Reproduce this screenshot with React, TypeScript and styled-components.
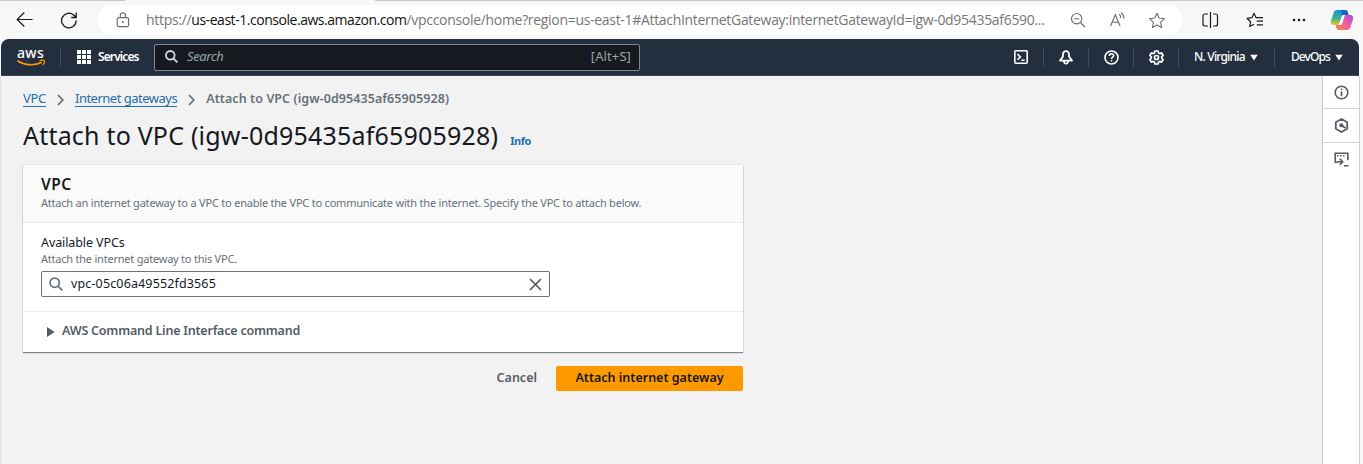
import React from "react";
import styled, { createGlobalStyle } from "styled-components";

const Global = createGlobalStyle`
  * { box-sizing: border-box; }
  body { margin: 0; background: #f7f7f7; font-family: "Noto Sans", "Open Sans", sans-serif; overflow: hidden; }
  svg { display: block; flex: none; }
`;

const Page = styled.div`
  width: 1363px;
  height: 464px;
  display: flex;
  flex-direction: column;
  overflow: hidden;
`;

const T = styled.span<{ $size: number; $ls?: number; $w?: number; $c?: string; $lh?: number; $up?: number; $ml?: number }>`
  font-size: ${(p) => p.$size}px;
  letter-spacing: ${(p) => p.$ls ?? 0}px;
  font-weight: ${(p) => p.$w ?? 400};
  color: ${(p) => p.$c ?? "#16191f"};
  line-height: ${(p) => p.$lh ?? 18}px;
  padding-bottom: ${(p) => p.$up ?? 0}px;
  margin-left: ${(p) => p.$ml ?? 0}px;
  white-space: nowrap;
`;

/* Browser chrome */
const TabEdge = styled.div`
  display: flex;
  justify-content: space-between;
  height: 1px;
  flex: none;
`;
const Edge = styled.div<{ $width: number }>`
  width: ${(p) => p.$width}px;
  background: #c9c9cb;
`;
const BrowserBar = styled.div`
  height: 38px;
  flex: none;
  display: flex;
  align-items: center;
  background: #f7f7f7;
  padding-left: 16px;
`;
const Reload = styled.div`
  margin: 0 19px 0 27px;
`;
const UrlPill = styled.div`
  width: 1086px;
  height: 30px;
  border-radius: 15px;
  background: #fff;
  display: flex;
  align-items: center;
  padding: 0 16px 0 19px;
`;
const Url = styled.div`
  width: 902px;
  margin-left: 16px;
  font-family: "Open Sans", "Noto Sans", sans-serif;
  font-size: 14px;
  line-height: 20px;
  letter-spacing: -0.31px;
  color: #767676;
  white-space: nowrap;
  b { font-weight: 400; color: #111; letter-spacing: -0.46px; }
`;
const PillTools = styled.div`
  display: flex;
  align-items: center;
  gap: 22px;
  margin-left: auto;
  padding-right: 1px;
`;
const BarTools = styled.div`
  display: flex;
  align-items: center;
  margin-left: 18px;
`;
const Gap = styled.span<{ $width: number }>`
  width: ${(p) => p.$width}px;
`;

/* Console navigation */
const Nav = styled.header`
  height: 37px;
  width: 1358px;
  margin-left: 1px;
  flex: none;
  display: flex;
  align-items: center;
  background: #232f3e;
  border-bottom: 1px solid #3b4450;
  border-radius: 8px 8px 0 0;
`;
const Logo = styled.div`
  width: 60px;
  height: 20px;
  display: flex;
  flex-direction: column;
  border-right: 1px solid #414d5c;
  padding-left: 16px;
`;
const LogoWord = styled.span`
  font-size: 14px;
  font-weight: 500;
  line-height: 18px;
  height: 15px;
  margin-top: -3px;
  letter-spacing: 0.3px;
  color: #fff;
`;
const Services = styled.div`
  display: flex;
  align-items: center;
  gap: 7px;
  width: 93px;
  padding-left: 16px;
`;
const NavSearch = styled.div`
  width: 486px;
  height: 27px;
  display: flex;
  align-items: center;
  justify-content: space-between;
  padding: 0 8px 1px 10px;
  border: 1px solid #7d8998;
  border-radius: 2px;
  background: #161a20;
`;
const SearchLeft = styled.div`
  display: flex;
  align-items: center;
  gap: 9px;
  em { font-size: 13px; color: #95a5a6; line-height: 18px; letter-spacing: -0.4px; padding-bottom: 1px; }
`;
const NavRight = styled.div`
  display: flex;
  margin-left: auto;
`;
const NavCell = styled.div<{ $width: number; $last?: boolean; $pad?: number }>`
  width: ${(p) => p.$width}px;
  height: 20px;
  display: flex;
  align-items: center;
  justify-content: ${(p) => (p.$pad ? "flex-start" : "center")};
  padding-left: ${(p) => p.$pad ?? 0}px;
  gap: 5px;
  border-right: ${(p) => (p.$last ? "none" : "1px solid #414d5c")};
`;

/* Console body */
const Body = styled.div`
  flex: 1;
  display: flex;
  width: 1360px;
  background: #f2f2f2;
  border-left: 1px solid #e4e4e6;
`;
const Main = styled.main`
  flex: 1;
  padding: 12px 0 0 22px;
`;
const Rail = styled.aside`
  width: 38px;
  background: #fff;
  border-left: 1px solid #c9cbcd;
  border-right: 1px solid #cfd1d3;
`;
const RailItem = styled.div<{ $h: number; $open?: boolean }>`
  height: ${(p) => p.$h}px;
  display: flex;
  align-items: center;
  justify-content: center;
  border-bottom: ${(p) => (p.$open ? "none" : "1px solid #d0d5d9")};
`;
const Crumbs = styled.nav`
  display: flex;
  align-items: center;
  height: 21px;
`;
const CrumbLink = styled.a<{ $ls: number }>`
  font-size: 13px;
  line-height: 16px;
  height: 17px;
  letter-spacing: ${(p) => p.$ls}px;
  color: #2470ad;
  border-bottom: 1px solid #2470ad;
  white-space: nowrap;
`;
const CrumbSep = styled.span<{ $wide?: boolean }>`
  padding: 2px 11px 0 ${(p) => (p.$wide ? 12 : 11)}px;
`;
const Heading = styled.div`
  display: flex;
  align-items: baseline;
  gap: 12px;
  height: 56px;
  padding-top: 8px;
`;
const Title = styled.h1`
  margin: 0;
  font-size: 25px;
  font-weight: 400;
  line-height: 36px;
  color: #16191f;
  letter-spacing: 0.2px;
  white-space: nowrap;
`;
const Card = styled.section`
  width: 720px;
  height: 187px;
  background: #fff;
  box-shadow: 0 0 1px 0 #aab0b6, 0 1px 1px 0 #777d86;
`;
const CardHead = styled.div`
  height: 58px;
  display: flex;
  flex-direction: column;
  padding: 9px 18px 0;
  background: #fafafa;
  border-bottom: 1px solid #eaeded;
`;
const CardBody = styled.div`
  height: 89px;
  display: flex;
  flex-direction: column;
  padding: 11px 18px 0;
  border-bottom: 1px solid #eaeded;
`;
const Input = styled.div`
  width: 509px;
  height: 26px;
  margin-top: 4px;
  display: flex;
  align-items: center;
  border: 1px solid #687078;
  border-radius: 2px;
  padding: 0 7px;
  svg:last-child { margin-left: auto; }
`;
const Expander = styled.div`
  height: 39px;
  display: flex;
  align-items: center;
  gap: 7px;
  padding-left: 24px;
`;
const Actions = styled.div`
  width: 720px;
  margin-top: 14px;
  display: flex;
  align-items: center;
  justify-content: flex-end;
  gap: 19px;
`;
const Primary = styled.button`
  width: 187px;
  height: 25px;
  padding: 0 0 1px;
  border: 0;
  border-radius: 2px;
  background: #ff9900;
  font-family: inherit;
  display: flex;
  align-items: center;
  justify-content: center;
`;

const Magnifier = ({ size, color, w }: { size: number; color: string; w: number }) => (
  <svg width={size} height={size} viewBox="0 0 13 13" fill="none" stroke={color} strokeWidth={w}>
    <circle cx="5.3" cy="5.3" r="4.3" />
    <path d="M8.4 8.4 12.4 12.4" />
  </svg>
);
const Chevron = () => (
  <svg width="7" height="12" viewBox="0 0 7 12" fill="none" stroke="#687078" strokeWidth="1.8">
    <path d="M1 1 5.8 6 1 11" />
  </svg>
);
const Caret = () => (
  <svg width="8" height="7" viewBox="0 0 8 7" fill="#fff"><path d="M.3.8h7.4L4 6.6z" /></svg>
);
const star = "M8 1.2 10.1 5.7 15 6.3 11.4 9.7 12.3 14.6 8 12.2 3.7 14.6 4.6 9.7 1 6.3 5.9 5.7z";

export default function App() {
  return (
    <Page>
      <Global />
      <TabEdge><Edge $width={125} /><Edge $width={988} /></TabEdge>
      <BrowserBar>
        <svg width="17" height="16" viewBox="0 0 17 16" fill="none" stroke="#1b1b1b" strokeWidth="1.2">
          <path d="M16.5 7.500H1.5M8.3.5 1.200 7.500l7.1 7" />
        </svg>
        <Reload>
          <svg width="18" height="17" viewBox="0 0 18 17" fill="none" stroke="#1b1b1b" strokeWidth="1.3">
            <path d="M16.200 8.500a7.300 7.300 0 1 1-2.500-5.500L15.900 5M16.200.5v5h-5" />
          </svg>
        </Reload>
        <UrlPill>
          <svg width="14" height="16" viewBox="0 0 14 16" fill="none" stroke="#666" strokeWidth="1.1">
            <rect x="1.2" y="5.6" width="11.4" height="9" rx="1.6" />
            <path d="M4.3 5.5V3.4a2.6 2.6 0 0 1 5.2 0v2.1" />
            <circle cx="6.9" cy="10" r=".9" fill="#555" stroke="none" />
          </svg>
          <Url>https://<b>us-east-1.console.aws.amazon.com</b>/vpcconsole/home?region=us-east-1#AttachInternetGateway:internetGatewayId=igw-0d95435af6590...</Url>
          <PillTools>
            <svg width="16" height="16" viewBox="0 0 16 16" fill="none" stroke="#6a6a6a" strokeWidth="1.1">
              <circle cx="6.7" cy="6.7" r="5.2" /><path d="M10.5 10.5 15 15M4.2 6.7h5" />
            </svg>
            <svg width="18" height="16" viewBox="0 0 18 16" fill="none" stroke="#6a6a6a" strokeWidth="1.1">
              <path d="M2.500 14 7.300 2.700 12.100 14M4.200 10.200h6.200M11 2.300a4 4 0 0 1 1.800 3.700M13 .7a7 7 0 0 1 3 6" />
            </svg>
            <svg width="18" height="17" viewBox="0 0 16 16" fill="none" stroke="#6a6a6a" strokeWidth="1" strokeLinejoin="round"><path d={star} /></svg>
          </PillTools>
        </UrlPill>
        <BarTools>
          <svg width="18" height="16" viewBox="0 0 18 16" fill="none" stroke="#1b1b1b" strokeWidth="1.2">
            <path d="M7 2H4a2 2 0 0 0-2 2v8a2 2 0 0 0 2 2h3M12 2h2.500a2 2 0 0 1 2 2v8a2 2 0 0 1-2 2H12M9.500 0v16" />
          </svg>
          <Gap $width={27} />
          <svg width="18" height="16" viewBox="0 0 18 16" fill="none" stroke="#1b1b1b" strokeWidth="1.2" strokeLinejoin="round">
            <path d="M11 5.7H10.1L8 1.2 5.9 5.7 1 6.3 4.6 9.7 3.7 14.6 8 12.2M10.8 5.6H17M10.8 9.2H17M10.8 12.8H17" />
          </svg>
          <Gap $width={28} />
          <svg width="14" height="4" viewBox="0 0 14 4" fill="#1b1b1b">
            <circle cx="2" cy="2" r="1.3" /><circle cx="7" cy="2" r="1.3" /><circle cx="12" cy="2" r="1.3" />
          </svg>
          <Gap $width={24} />
          <svg width="24" height="22" viewBox="0 0 24 22">
            <defs>
              <linearGradient id="cl" x1="0" y1="0" x2="0" y2="1"><stop offset="0" stopColor="#1b8fe0" /><stop offset=".55" stopColor="#35b48c" /><stop offset="1" stopColor="#f4c52c" /></linearGradient>
              <linearGradient id="cr" x1="1" y1="0" x2="0" y2="1"><stop offset="0" stopColor="#a14ee0" /><stop offset=".5" stopColor="#ee5d9b" /><stop offset="1" stopColor="#fb8a3c" /></linearGradient>
            </defs>
            <path d="M7.2 1h8c1.5 0 2.2.9 2.6 2.4L18.500 6h-3c-2 0-2.800 1-3.400 3l-1.600 5c-.5 1.500-1.300 2-2.800 2H3.800C1 16 .4 13.700 1.200 11L3.600 4C4.300 2 5.200 1 7.200 1z" fill="url(#cl)" />
            <path d="M11 1h4.500c1.300 0 2 .9 2.400 2.400L18.600 6H16c-2 0-2.800.6-3.500 2z" fill="#1f5fcc" />
            <path d="M16.800 21h-8c-1.500 0-2.200-.9-2.600-2.400L5.500 16h3c2 0 2.800-1 3.400-3l1.600-5c.5-1.500 1.300-2 2.800-2h3.900c2.800 0 3.400 2.300 2.600 5l-2.400 7c-.7 2-1.600 3-3.600 3z" fill="url(#cr)" />
            <path d="M14.500 7.200 15.600 6h-2.200c-1.200 0-1.700 1-2 2l-2 6.500L8 16h2.400c1.200 0 1.700-.9 2-2z" fill="#fff" />
          </svg>
        </BarTools>
      </BrowserBar>

      <Nav>
        <Logo>
          <LogoWord>aws</LogoWord>
          <svg width="30" height="10" viewBox="0 0 30 10">
            <path d="M.5 1.800c7.500 4.900 17.500 5 24.200 1.500" fill="none" stroke="#f90" strokeWidth="1.700" />
            <path d="M22.500 1.800c2-.8 4.600-.9 5 .1.300 1-.6 3-1.700 4" fill="none" stroke="#f90" strokeWidth="1.200" />
          </svg>
        </Logo>
        <Services>
          <svg width="14" height="14" viewBox="0 0 14 14" fill="#fff">
            {[0, 5, 10].map((y) => [0, 5, 10].map((x) => <rect key={`${x}-${y}`} x={x} y={y} width="4" height="4" />))}
          </svg>
          <T $size={12} $w={600} $c="#fff" $ls={-0.9} $up={1}>Services</T>
        </Services>
        <NavSearch>
          <SearchLeft><Magnifier size={13} color="#d5dbdb" w={1.8} /><em>Search</em></SearchLeft>
          <T $size={13} $c="#95a5a6" $ls={0.1} $up={1}>[Alt+S]</T>
        </NavSearch>
        <NavRight>
          <NavCell $width={45}>
            <svg width="14" height="14" viewBox="0 0 14 14" fill="none" stroke="#fff" strokeWidth="1.600">
              <rect x=".8" y=".8" width="12.400" height="12.400" rx="1" /><path d="M3.500 4 6.300 6.900 3.500 9.800M7.300 10.300h3.400" />
            </svg>
          </NavCell>
          <NavCell $width={45}>
            <svg width="14" height="15" viewBox="0 0 14 15" fill="none" stroke="#fff" strokeWidth="1.800" strokeLinejoin="round">
              <path d="M7 1.200C4.800 1.200 4 2.800 4 4.800v1.700L1 10.600h12l-3-4.100V4.800C10 2.800 9.200 1.200 7 1.200zM5 11.500c.2 2.700 3.800 2.700 4 0" />
            </svg>
          </NavCell>
          <NavCell $width={45}>
            <svg width="15" height="15" viewBox="0 0 15 15" fill="none" stroke="#fff" strokeWidth="1.600">
              <circle cx="7.500" cy="7.500" r="6.500" /><path d="M5.300 6c0-3 4.400-2.900 4.400-.4C9.700 7.200 7.500 7 7.500 9M7.500 10v1.600" />
            </svg>
          </NavCell>
          <NavCell $width={45}>
            <svg width="15" height="15" viewBox="0 0 15 15" fill="none" stroke="#fff" strokeWidth="1.700" strokeLinejoin="round">
              <path d="M5.900 1h3.200l.4 1.900 1.200.7 1.900-.7 1.500 2.600-1.400 1.300v1.400l1.400 1.300-1.500 2.600-1.900-.7-1.200.7-.4 1.900H5.900l-.4-1.900-1.200-.7-1.900.7L.9 9.500l1.400-1.300V6.800L.9 5.500l1.500-2.600 1.900.7 1.200-.7z" />
              <circle cx="7.500" cy="7.500" r="2" />
            </svg>
          </NavCell>
          <NavCell $width={96} $pad={15}><T $size={12} $w={500} $c="#fff" $ls={-0.8} $up={1}>N. Virginia</T><Caret /></NavCell>
          <NavCell $width={84} $pad={16} $last><T $size={12} $w={500} $c="#fff" $ls={-0.9} $up={1}>DevOps</T><Caret /></NavCell>
        </NavRight>
      </Nav>

      <Body>
        <Main>
          <Crumbs>
            <CrumbLink $ls={-0.3}>VPC</CrumbLink>
            <CrumbSep><Chevron /></CrumbSep>
            <CrumbLink $ls={-0.5}>Internet gateways</CrumbLink>
            <CrumbSep><Chevron /></CrumbSep>
            <T $size={12.5} $w={600} $c="#687078" $ls={0.08}>Attach to VPC (igw-0d95435af65905928)</T>
          </Crumbs>
          <Heading>
            <Title>Attach to VPC (igw-0d95435af65905928)</Title>
            <T $size={11} $w={700} $c="#2470ad" $ls={-0.5}>Info</T>
          </Heading>
          <Card>
            <CardHead>
              <T $size={15.5} $w={600} $ls={0.5} $lh={20} $up={1}>VPC</T>
              <T $size={11} $c="#687078" $ls={-0.21} $lh={16}>Attach an internet gateway to a VPC to enable the VPC to communicate with the internet. Specify the VPC to attach below.</T>
            </CardHead>
            <CardBody>
              <T $size={12.500} $ls={-0.1} $lh={17}>Available VPCs</T>
              <T $size={11} $c="#687078" $ls={-0.22} $lh={16}>Attach the internet gateway to this VPC.</T>
              <Input>
                <Magnifier size={14} color="#687078" w={1.600} />
                <T $size={12.500} $ls={0.14} $ml={8}>vpc-05c06a49552fd3565</T>
                <svg width="13" height="13" viewBox="0 0 13 13" fill="none" stroke="#545b64" strokeWidth="1.700"><path d="m1 1 11 11M12 1 1 12" /></svg>
              </Input>
            </CardBody>
            <Expander>
              <svg width="8" height="10" viewBox="0 0 8 10" fill="#545b64"><path d="M0 0 7.700 5 0 10z" /></svg>
              <T $size={12.500} $w={600} $c="#545b64" $ls={-0.21} $up={2}>AWS Command Line Interface command</T>
            </Expander>
          </Card>
          <Actions>
            <T $size={12.500} $w={600} $c="#545b64" $up={1}>Cancel</T>
            <Primary><T $size={12.500} $w={600}>Attach internet gateway</T></Primary>
          </Actions>
        </Main>
        <Rail>
          <RailItem $h={33}>
            <svg width="15" height="15" viewBox="0 0 15 15" fill="none" stroke="#545b64" strokeWidth="1.600"><circle cx="7.500" cy="7.500" r="6.300" /><path d="M7.500 3.500v1.600M7.500 6.200v5" /></svg>
          </RailItem>
          <RailItem $h={34}>
            <svg width="15" height="15" viewBox="0 0 15 15" fill="none" stroke="#545b64" strokeWidth="1.800" strokeLinejoin="round"><path d="M7.500 1 13.200 4.200v6.600L7.500 14 1.800 10.800V4.200z" /><circle cx="7.300" cy="7.300" r="2" fill="#545b64" stroke="none" /><path d="m7.500 7.500 4 2.500" /></svg>
          </RailItem>
          <RailItem $h={32} $open>
            <svg width="15" height="15" viewBox="0 0 15 15" fill="none" stroke="#545b64" strokeWidth="1.600"><path d="M4 10.200H1.200V1.200h12.600v7M3 3.700h1.500M6 3.700h1.500M9 3.700h1.500M4 9.700h4M5.700 6.700l3 3-3 3M10 13.800h4.500" /></svg>
          </RailItem>
        </Rail>
      </Body>
    </Page>
  );
}
